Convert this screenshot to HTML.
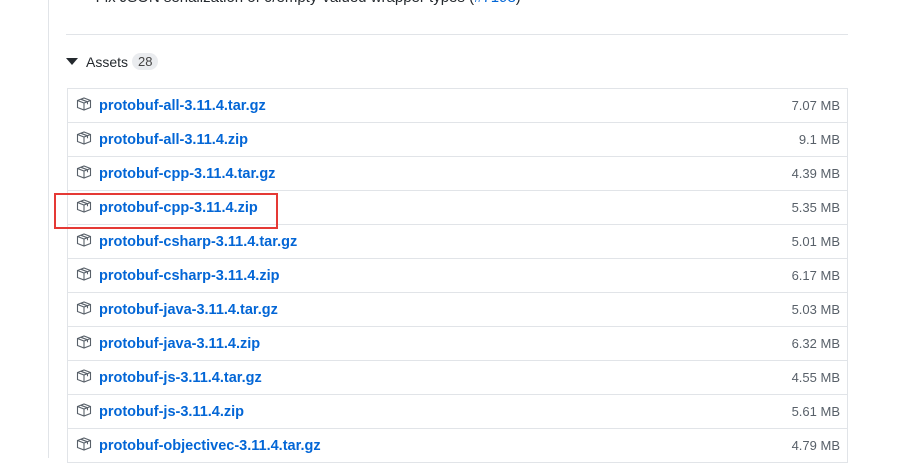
<!DOCTYPE html><html><head><style>
body{margin:0;width:908px;height:458px;overflow:hidden;background:#fff;font-family:"Liberation Sans",sans-serif;position:relative}
.vl{position:absolute;left:48px;top:0;width:1px;height:458px;background:#e1e4e8}
.top{position:absolute;left:82px;top:-11px;font-size:15px;color:#24292e;white-space:nowrap}
.top a{color:#0366d6}
.hr{position:absolute;left:66px;top:34px;width:782px;height:1px;background:#e1e4e8}
.as{position:absolute;left:66px;top:53px;font-size:14px;color:#24292e;display:flex;align-items:center}
.tri{width:0;height:0;border-left:6px solid transparent;border-right:6px solid transparent;border-top:7px solid #24292e;margin-right:8px}
.cnt{background:#eaecef;border-radius:10px;font-size:13px;padding:1px 6px;margin-left:4px;color:#444}
.box{position:absolute;left:67px;top:88px;width:779px;border:1px solid #e1e4e8;border-bottom:none}
.row{height:33px;border-bottom:1px solid #e1e4e8;display:flex;align-items:center;padding:0 8px;position:relative}
.row svg{margin-right:7px;margin-top:-3px}
.row a{color:#0366d6;font-weight:bold;font-size:14.5px;text-decoration:none}
.row span{position:absolute;right:7px;font-size:13px;color:#586069}
.red{position:absolute;left:54px;top:193px;width:220px;height:32px;border:2px solid #e53935}
</style></head><body>
<div class="vl"></div>
<div class="top">• &nbsp;Fix JSON serialization of 0/empty-valued wrapper types (<a>#7198</a>)</div>
<div class="hr"></div>
<div class="as"><div class="tri"></div>Assets <span class="cnt">28</span></div>
<div class="box">
<div class="row"><svg width="16" height="16" viewBox="0 0 16 16"><path d="M1.5 4.5L8 2l6.5 2.5v7L8 14l-6.5-2.5z M1.5 4.5L8 7l6.5-2.5 M8 7v7 M5 3.3l6.5 2.5v2.5" fill="none" stroke="#586069" stroke-width="1.1"/></svg><a>protobuf-all-3.11.4.tar.gz</a><span>7.07 MB</span></div>
<div class="row"><svg width="16" height="16" viewBox="0 0 16 16"><path d="M1.5 4.5L8 2l6.5 2.5v7L8 14l-6.5-2.5z M1.5 4.5L8 7l6.5-2.5 M8 7v7 M5 3.3l6.5 2.5v2.5" fill="none" stroke="#586069" stroke-width="1.1"/></svg><a>protobuf-all-3.11.4.zip</a><span>9.1 MB</span></div>
<div class="row"><svg width="16" height="16" viewBox="0 0 16 16"><path d="M1.5 4.5L8 2l6.5 2.5v7L8 14l-6.5-2.5z M1.5 4.5L8 7l6.5-2.5 M8 7v7 M5 3.3l6.5 2.5v2.5" fill="none" stroke="#586069" stroke-width="1.1"/></svg><a>protobuf-cpp-3.11.4.tar.gz</a><span>4.39 MB</span></div>
<div class="row"><svg width="16" height="16" viewBox="0 0 16 16"><path d="M1.5 4.5L8 2l6.5 2.5v7L8 14l-6.5-2.5z M1.5 4.5L8 7l6.5-2.5 M8 7v7 M5 3.3l6.5 2.5v2.5" fill="none" stroke="#586069" stroke-width="1.1"/></svg><a>protobuf-cpp-3.11.4.zip</a><span>5.35 MB</span></div>
<div class="row"><svg width="16" height="16" viewBox="0 0 16 16"><path d="M1.5 4.5L8 2l6.5 2.5v7L8 14l-6.5-2.5z M1.5 4.5L8 7l6.5-2.5 M8 7v7 M5 3.3l6.5 2.5v2.5" fill="none" stroke="#586069" stroke-width="1.1"/></svg><a>protobuf-csharp-3.11.4.tar.gz</a><span>5.01 MB</span></div>
<div class="row"><svg width="16" height="16" viewBox="0 0 16 16"><path d="M1.5 4.5L8 2l6.5 2.5v7L8 14l-6.5-2.5z M1.5 4.5L8 7l6.5-2.5 M8 7v7 M5 3.3l6.5 2.5v2.5" fill="none" stroke="#586069" stroke-width="1.1"/></svg><a>protobuf-csharp-3.11.4.zip</a><span>6.17 MB</span></div>
<div class="row"><svg width="16" height="16" viewBox="0 0 16 16"><path d="M1.5 4.5L8 2l6.5 2.5v7L8 14l-6.5-2.5z M1.5 4.5L8 7l6.5-2.5 M8 7v7 M5 3.3l6.5 2.5v2.5" fill="none" stroke="#586069" stroke-width="1.1"/></svg><a>protobuf-java-3.11.4.tar.gz</a><span>5.03 MB</span></div>
<div class="row"><svg width="16" height="16" viewBox="0 0 16 16"><path d="M1.5 4.5L8 2l6.5 2.5v7L8 14l-6.5-2.5z M1.5 4.5L8 7l6.5-2.5 M8 7v7 M5 3.3l6.5 2.5v2.5" fill="none" stroke="#586069" stroke-width="1.1"/></svg><a>protobuf-java-3.11.4.zip</a><span>6.32 MB</span></div>
<div class="row"><svg width="16" height="16" viewBox="0 0 16 16"><path d="M1.5 4.5L8 2l6.5 2.5v7L8 14l-6.5-2.5z M1.5 4.5L8 7l6.5-2.5 M8 7v7 M5 3.3l6.5 2.5v2.5" fill="none" stroke="#586069" stroke-width="1.1"/></svg><a>protobuf-js-3.11.4.tar.gz</a><span>4.55 MB</span></div>
<div class="row"><svg width="16" height="16" viewBox="0 0 16 16"><path d="M1.5 4.5L8 2l6.5 2.5v7L8 14l-6.5-2.5z M1.5 4.5L8 7l6.5-2.5 M8 7v7 M5 3.3l6.5 2.5v2.5" fill="none" stroke="#586069" stroke-width="1.1"/></svg><a>protobuf-js-3.11.4.zip</a><span>5.61 MB</span></div>
<div class="row"><svg width="16" height="16" viewBox="0 0 16 16"><path d="M1.5 4.5L8 2l6.5 2.5v7L8 14l-6.5-2.5z M1.5 4.5L8 7l6.5-2.5 M8 7v7 M5 3.3l6.5 2.5v2.5" fill="none" stroke="#586069" stroke-width="1.1"/></svg><a>protobuf-objectivec-3.11.4.tar.gz</a><span>4.79 MB</span></div>
</div>
<div class="red"></div>
</body></html>
